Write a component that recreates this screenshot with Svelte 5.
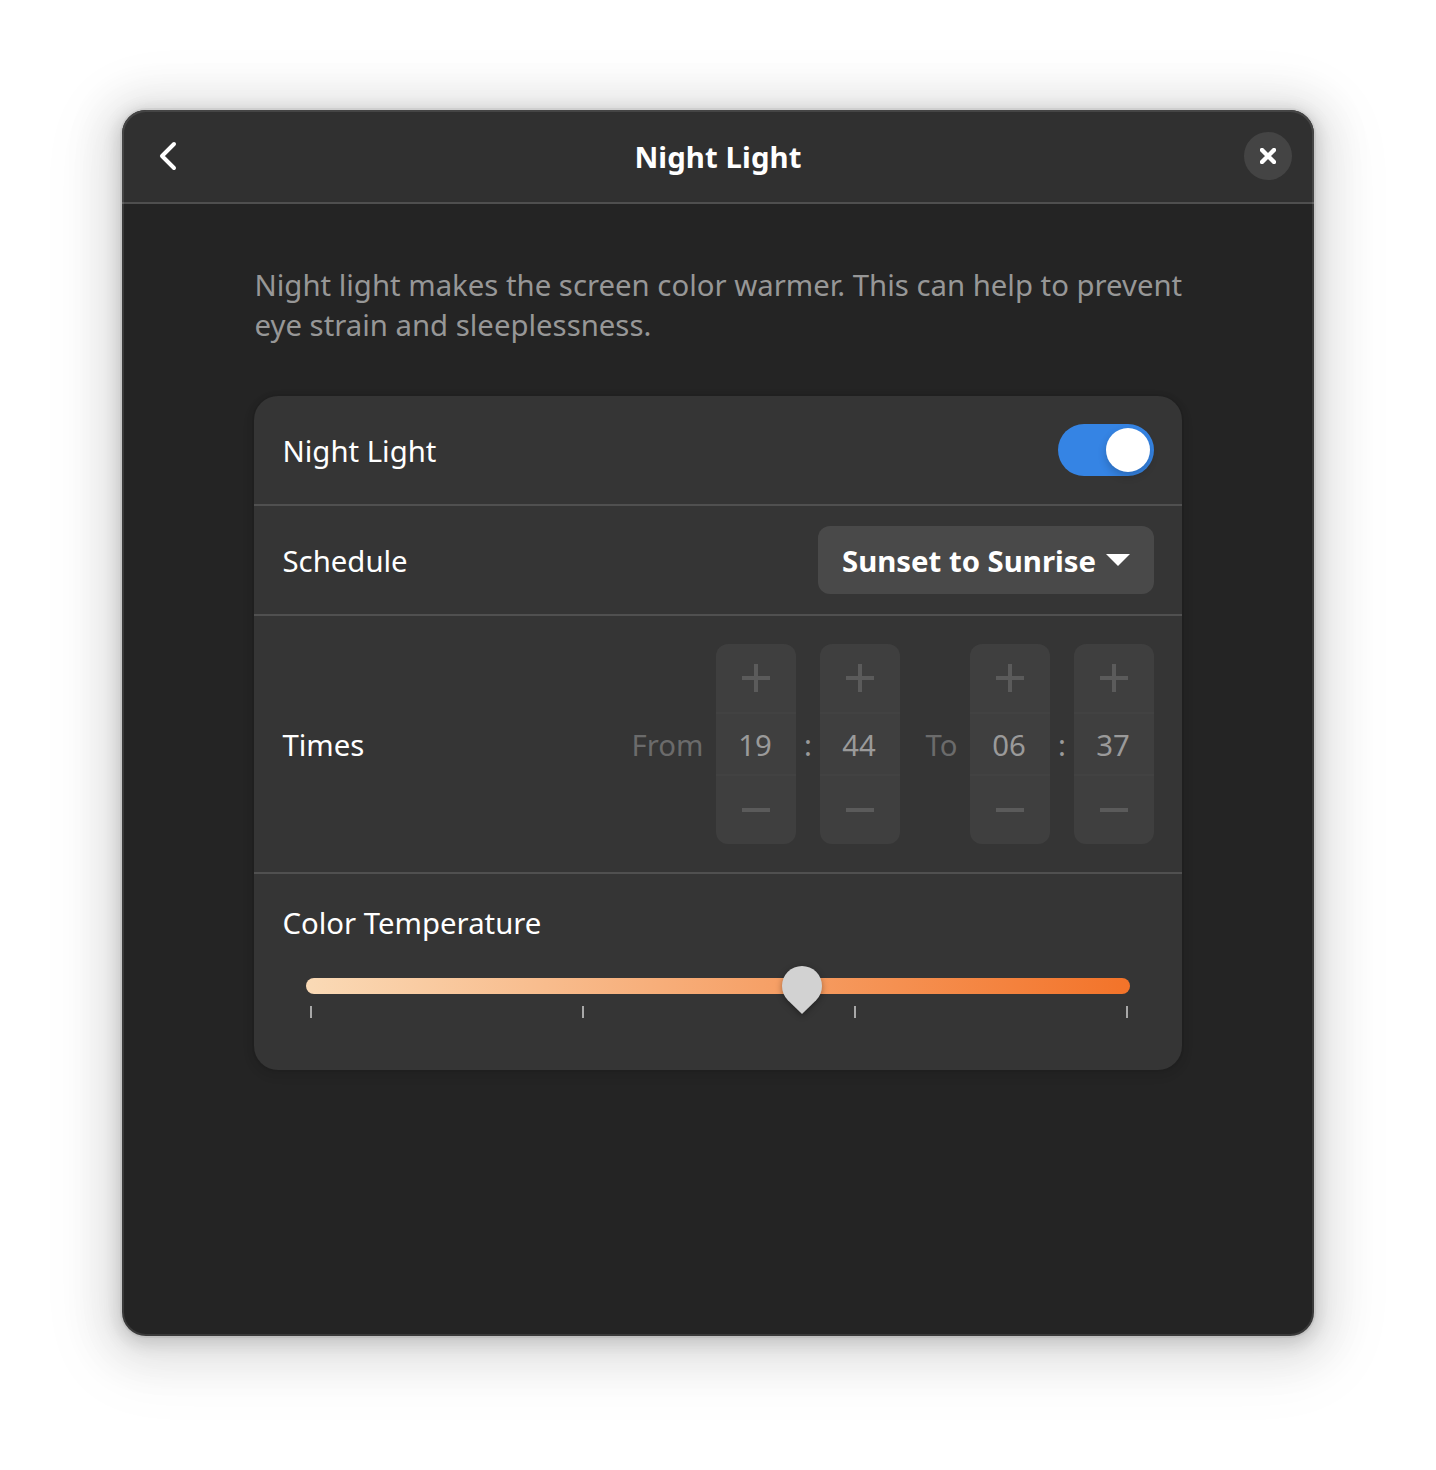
<script>
  const times = [
    { label: 'From', hours: '19', minutes: '44' },
    { label: 'To', hours: '06', minutes: '37' }
  ];
  const marks = [0, 1, 2, 3];
  let enabled = $state(true);
</script>

{#snippet spinner(value)}
  <div class="spinner">
    <button class="step" aria-label="Increase" disabled>
      <svg width="28" height="28" viewBox="0 0 28 28"><path d="M12 0h4v12h12v4H16v12h-4V16H0v-4h12z" /></svg>
    </button>
    <span class="value">{value}</span>
    <button class="step" aria-label="Decrease" disabled>
      <svg width="28" height="28" viewBox="0 0 28 28"><path d="M0 12h28v4H0z" /></svg>
    </button>
  </div>
{/snippet}

<main class="desktop">
  <section class="window">
    <header>
      <button class="back" aria-label="Back">
        <svg width="32" height="32" viewBox="0 0 32 32"><path d="M22 4L10 16L22 28" /></svg>
      </button>
      <h1>Night Light</h1>
      <button class="close" aria-label="Close">
        <svg width="16" height="16" viewBox="0 0 16 16"><path d="M2 2L14 14M14 2L2 14" /></svg>
      </button>
    </header>

    <div class="content">
      <p>Night light makes the screen color warmer. This can help to prevent eye strain and sleeplessness.</p>

      <div class="card">
        <div class="row">
          <span>Night Light</span>
          <button class="switch" class:on={enabled} role="switch" aria-checked={enabled} aria-label="Night Light" onclick={() => (enabled = !enabled)}>
            <span class="knob"></span>
          </button>
        </div>
        <div class="row">
          <span>Schedule</span>
          <button class="dropdown">
            <span>Sunset to Sunrise</span>
            <svg width="24" height="12" viewBox="0 0 24 12"><path d="M0 0h24L12 12z" /></svg>
          </button>
        </div>
        <div class="row times">
          <span>Times</span>
          <div class="ranges">
            {#each times as time}
              <div class="range">
                <span class="dim">{time.label}</span>
                {@render spinner(time.hours)}
                <span class="colon">:</span>
                {@render spinner(time.minutes)}
              </div>
            {/each}
          </div>
        </div>
        <div class="temperature">
          <span class="caption">Color Temperature</span>
          <div class="scale">
            <div class="track">
              <svg class="thumb" width="40" height="48" viewBox="0 0 40 48"><path d="M20 48L5.86 34.14A20 20 0 1 1 34.14 34.14Z" /></svg>
            </div>
            <div class="marks">
              {#each marks as mark (mark)}<i></i>{/each}
            </div>
          </div>
        </div>
      </div>
    </div>
  </section>
</main>

<style>
  :global(body) {
    margin: 0;
    background: #fff;
  }
  .desktop {
    box-sizing: border-box;
    height: 1470px;
    padding: 110px 122px 134px;
    overflow: hidden;
    font: 29.33px/40px 'Noto Sans', sans-serif;
    color: #fff;
  }
  button {
    display: flex;
    align-items: center;
    justify-content: center;
    padding: 0;
    border: 0;
    background: none;
    color: inherit;
    font: inherit;
  }
  svg {
    display: block;
    fill: currentColor;
  }
  .window {
    position: relative;
    height: 1226px;
    border-radius: 24px;
    background: #242424;
    box-shadow:
      0 4px 16px 4px rgba(0, 0, 0, 0.13),
      0 6px 40px 20px rgba(0, 0, 0, 0.09),
      0 12px 64px 32px rgba(0, 0, 0, 0.04),
      0 0 0 2px rgba(0, 0, 0, 0.05);
  }
  .window::after {
    content: '';
    position: absolute;
    inset: 0;
    border-radius: inherit;
    box-shadow: inset 0 0 0 2px rgba(255, 255, 255, 0.1);
    pointer-events: none;
  }
  header {
    box-sizing: border-box;
    display: grid;
    grid-template-columns: 48px 1fr 48px;
    align-items: center;
    height: 94px;
    padding: 0 22px;
    border-bottom: 2px solid #4f4f4f;
    border-radius: 24px 24px 0 0;
    background: #303030;
  }
  h1 {
    margin: 2px 0 0;
    text-align: center;
    font: inherit;
    font-weight: 700;
    letter-spacing: 0.1px;
  }
  .back {
    width: 48px;
    height: 48px;
  }
  .back svg,
  .close svg {
    fill: none;
    stroke: #fff;
    stroke-width: 4;
    stroke-linecap: round;
    stroke-linejoin: round;
  }
  .close {
    width: 48px;
    height: 48px;
    border-radius: 50%;
    background: #444;
  }
  .close svg {
    stroke-width: 4.4;
  }
  .content {
    padding: 61px 132px 0;
  }
  p {
    margin: 0 -4px 51px 0;
    padding-left: 0.5px;
    color: #979797;
  }
  .card {
    height: 674px;
    border-radius: 24px;
    background: #353535;
    box-shadow:
      0 0 0 2px rgba(0, 0, 0, 0.03),
      0 2px 6px 2px rgba(0, 0, 0, 0.07),
      0 4px 12px 4px rgba(0, 0, 0, 0.03);
  }
  .row {
    box-sizing: border-box;
    display: flex;
    align-items: center;
    justify-content: space-between;
    height: 110px;
    padding: 0 28px;
    border-bottom: 2px solid #505050;
  }
  .row > span {
    padding: 2px 0 0 0.5px;
  }
  .caption {
    padding-left: 0.5px;
  }
  .switch {
    box-sizing: border-box;
    justify-content: flex-start;
    width: 96px;
    height: 52px;
    padding: 4px;
    border-radius: 26px;
    background: #4d4d4d;
  }
  .switch.on {
    justify-content: flex-end;
    background: #3584e4;
  }
  .knob {
    width: 44px;
    height: 44px;
    border-radius: 50%;
    background: #fff;
    box-shadow: 0 4px 8px rgba(0, 0, 0, 0.2);
  }
  .dropdown {
    gap: 10px;
    height: 68px;
    padding: 0 24px;
    border-radius: 12px;
    background: #494949;
    font-weight: 700;
  }
  .dropdown span {
    padding-top: 2px;
  }
  .times {
    height: 258px;
  }
  .ranges,
  .range {
    display: flex;
    align-items: center;
  }
  .ranges {
    gap: 25.5px;
  }
  .dim {
    margin: 2px 12.5px 0 0;
    color: #6b6b6b;
  }
  .colon {
    width: 24px;
    padding-top: 2px;
    text-align: center;
    color: #9a9a9a;
  }
  .spinner {
    display: grid;
    grid-template-rows: 68px 64px 68px;
    width: 80px;
    border-radius: 12px;
    background: #3f3f3f;
  }
  .step {
    color: #5b5b5b;
  }
  .value {
    box-sizing: border-box;
    padding: 11px 2px 0 0;
    border-top: 2px solid #424242;
    border-bottom: 2px solid #424242;
    text-align: center;
    color: #9a9a9a;
  }
  .temperature {
    padding: 29px 28px 0;
  }
  .scale {
    padding: 35px 24px 0;
  }
  .track {
    position: relative;
    height: 16px;
    border-radius: 8px;
    background: linear-gradient(to right, #fadab6, #f37329);
  }
  .thumb {
    position: absolute;
    left: 476px;
    top: -12px;
    overflow: visible;
    color: #d2d2d2;
    filter: drop-shadow(0 2px 3px rgba(0, 0, 0, 0.35));
  }
  .marks {
    display: flex;
    justify-content: space-between;
    padding: 12px 2px 0 4px;
  }
  .marks i {
    width: 2px;
    height: 12px;
    background: #a8a8a8;
  }
</style>
